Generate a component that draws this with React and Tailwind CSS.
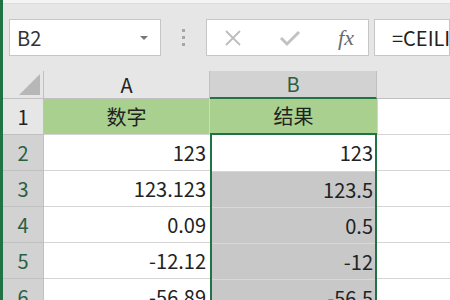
import React from 'react';

const font = { fontFamily: '"Noto Sans CJK SC", "Noto Sans", sans-serif' };

const rows = [
  { n: '2', a: '123', b: '123', active: true },
  { n: '3', a: '123.123', b: '123.5' },
  { n: '4', a: '0.09', b: '0.5' },
  { n: '5', a: '-12.12', b: '-12' },
  { n: '6', a: '-56.89', b: '-56.5' },
];

function FxIcon() {
  return (
    <span className="text-[22px] italic text-[#6b6b6b] leading-none" style={{ fontFamily: '"Liberation Serif", serif' }}>
      fx
    </span>
  );
}

export default function App() {
  return (
    <div className="w-[450px] h-[300px] overflow-hidden flex bg-[#e6e6e6] text-[#222]" style={font}>
      <div className="w-[3px] shrink-0 bg-[#217346]" />
      <div className="flex-1 flex flex-col min-w-0">
        <div className="h-[4px] shrink-0 bg-[#f4f4f4] border-b border-[#dcdcdc]" />

        {/* formula bar */}
        <div className="flex shrink-0 items-stretch h-[37px] mt-[15px] pl-[6px]">
          <div className="w-[152px] shrink-0 bg-white border border-[#c6c6c6] flex items-center justify-between pl-[7px] pr-[12px]">
            <span className="text-[20px] leading-none text-[#333]">B2</span>
            <span className="w-0 h-0 border-l-[4px] border-r-[4px] border-t-[4px] border-l-transparent border-r-transparent border-t-[#777]" />
          </div>
          <div className="w-[45px] shrink-0 flex flex-col items-center justify-center gap-[4px]">
            <span className="w-[3px] h-[3px] bg-[#a6a6a6]" />
            <span className="w-[3px] h-[3px] bg-[#a6a6a6]" />
            <span className="w-[3px] h-[3px] bg-[#a6a6a6]" />
          </div>
          <div className="w-[163px] shrink-0 bg-white border border-[#c6c6c6] flex items-center pl-[17px] pr-[14px] justify-between">
            <svg width="18" height="18" viewBox="0 0 18 18" fill="none" stroke="#bdbdbd" strokeWidth="1.8">
              <path d="M2 2 L16 16 M16 2 L2 16" />
            </svg>
            <svg width="22" height="18" viewBox="0 0 22 18" fill="none" stroke="#c2c2c2" strokeWidth="3">
              <path d="M2 9 L8 15 L20 3" />
            </svg>
            <FxIcon />
          </div>
          <div className="w-[5px] shrink-0" />
          <div className="flex-1 bg-white border border-[#c6c6c6] flex items-center pl-[17px] overflow-hidden">
            <span className="text-[20px] leading-none text-[#222] whitespace-nowrap">=CEILING</span>
          </div>
        </div>

        {/* column headers */}
        <div className="flex shrink-0 h-[28px] mt-[15px]">
          <div className="w-[41px] shrink-0 border-r border-b border-[#c0c0c0] flex items-end justify-end pr-[3px] pb-[3px]">
            <svg width="21" height="21" viewBox="0 0 21 21">
              <path d="M21 0 L21 21 L0 21 Z" fill="#b7b7b7" />
            </svg>
          </div>
          <div className="w-[166px] shrink-0 border-r border-b border-[#c0c0c0] flex items-center justify-center text-[20px] text-[#222]">A</div>
          <div className="w-[167px] shrink-0 bg-[#d2d2d2] border-r border-[#c0c0c0] border-b-2 border-b-[#217346] flex items-center justify-center text-[20px] text-[#2b5f41]">B</div>
          <div className="flex-1 border-b border-[#c0c0c0]" />
        </div>

        {/* row 1 */}
        <div className="flex shrink-0 h-[36px]">
          <div className="w-[41px] shrink-0 border-r border-b border-[#c0c0c0] flex items-center justify-center text-[20px] text-[#222]">1</div>
          <div className="w-[166px] shrink-0 bg-[#a9d08e] border-r border-b border-[#d4d4d4] flex items-center justify-center text-[20px]">数字</div>
          <div className="w-[167px] shrink-0 bg-[#a9d08e] border-b-2 border-b-[#217346] flex items-center justify-center text-[20px]">结果</div>
          <div className="flex-1 bg-white border-l border-b border-[#d4d4d4]" />
        </div>

        {rows.map((r) => (
          <div key={r.n} className="flex shrink-0 h-[36px]">
            <div className="w-[41px] shrink-0 bg-[#d2d2d2] border-r border-b border-[#c0c0c0] flex items-center justify-center text-[20px] text-[#2b5f41]">{r.n}</div>
            <div className="w-[166px] shrink-0 bg-white border-b border-[#d4d4d4] flex items-center justify-end pr-[4px] text-[20px]">{r.a}</div>
            <div className="w-[167px] shrink-0 border-l-2 border-r-2 border-[#217346] flex">
              <div className={`flex-1 flex items-center justify-end pr-[2px] text-[20px] ${r.active ? 'bg-white' : 'bg-[#c8c8c8] border-t border-t-[#d8d8d8]'}`}>{r.b}</div>
            </div>
            <div className="flex-1 bg-white border-b border-[#d4d4d4]" />
          </div>
        ))}
      </div>
    </div>
  );
}
